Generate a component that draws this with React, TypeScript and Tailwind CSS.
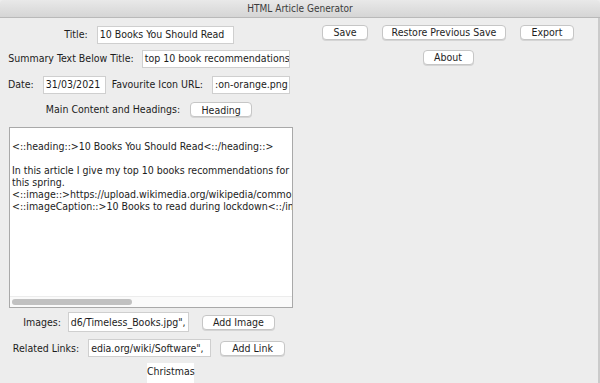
import React from 'react';

const font = { fontFamily: '"DejaVu Sans Condensed", "Open Sans", sans-serif' };

const Field: React.FC<{ text: string; w: string; h?: string }> = ({ text, w, h = 'h-[18px]' }) => (
    <div className={`${w} ${h} flex items-center bg-white border border-[#cfcfcf] px-[2px] overflow-hidden whitespace-nowrap text-[10.5px] text-[#1c1c1c]`}>
        {text}
    </div>
);

const Btn: React.FC<{ label: string; w: string }> = ({ label, w }) => (
    <button className={`${w} h-[15px] flex items-center justify-center bg-white border border-[#c6c6c6] rounded-[4px] shadow-[0_1px_0_#d5d5d5] text-[10.5px] text-[#1e1e1e] leading-none`}>
        {label}
    </button>
);

const content = [
    '',
    '<::heading::>10 Books You Should Read<::/heading::>',
    '',
    'In this article I give my top 10 books recommendations for',
    'this spring.',
    '<::image::>https://upload.wikimedia.org/wikipedia/commons/',
    '<::imageCaption::>10 Books to read during lockdown<::/imageCaption::>',
];

export default function App() {
    return (
        <div className="w-[600px] h-[383px] overflow-hidden bg-[#ededed] text-[#1c1c1c]" style={font}>
            {/* title bar */}
            <div className="h-[18px] flex items-center justify-center bg-gradient-to-b from-[#e9e9e9] to-[#d5d5d5] border-b border-[#b9b9b9] text-[10px] text-[#3c3c3c] rounded-t-[4px]">
                HTML Article Generator
            </div>

            <div className="flex h-[365px] border-r-2 border-[#cbcbcb] w-[600px]">
                {/* left panel */}
                <div className="w-[298px] flex flex-col text-[10.5px]">
                    <div className="mt-[8px] flex items-center justify-center gap-[9px]">
                        <span>Title:</span>
                        <Field text="10 Books You Should Read" w="w-[137px]" />
                    </div>
                    <div className="mt-[6px] flex items-center justify-center gap-[8px]">
                        <span>Summary Text Below Title:</span>
                        <Field text="top 10 book recommendations" w="w-[148px]" />
                    </div>
                    <div className="mt-[8px] flex items-center justify-center gap-[6px]">
                        <span className="mr-[3px]">Date:</span>
                        <Field text="31/03/2021" w="w-[63px]" />
                        <span className="mr-[3px]">Favourite Icon URL:</span>
                        <Field text=":on-orange.png" w="w-[78px]" />
                    </div>
                    <div className="mt-[8px] flex items-center justify-center gap-[10px]">
                        <span>Main Content and Headings:</span>
                        <Btn label="Heading" w="w-[62px]" />
                    </div>

                    <div className="mt-[9px] ml-[9px] w-[284px] h-[185px] bg-white border border-[#a9a9a9] flex flex-col">
                        <div className="flex-1 overflow-hidden pl-[2px] leading-[12px] whitespace-pre">
                            {content.map((line, i) => (
                                <div key={i} className="h-[12px] overflow-hidden">{line}</div>
                            ))}
                        </div>
                        <div className="h-[11px] bg-[#fafafa] border-t border-[#ececec] flex items-center px-[2px]">
                            <div className="w-[120px] h-[6px] rounded-full bg-[#c1c1c1]" />
                        </div>
                    </div>

                    <div className="mt-[4px] flex items-center justify-center gap-[7px]">
                        <span>Images:</span>
                        <Field text='d6/Timeless_Books.jpg",' w="w-[121px]" h="h-[20px]" />
                        <div className="ml-[6px]">
                            <Btn label="Add Image" w="w-[73px]" />
                        </div>
                    </div>
                    <div className="mt-[7px] flex items-center justify-center gap-[9px]">
                        <span>Related Links:</span>
                        <Field text='edia.org/wiki/Software",' w="w-[123px]" />
                        <Btn label="Add Link" w="w-[65px]" />
                    </div>
                    <div className="mt-[6px] ml-[147px] w-[47px] h-[20px] bg-white text-center leading-[16px]">
                        Christmas
                    </div>
                </div>

                {/* right panel */}
                <div className="flex-1 flex flex-col items-center">
                    <div className="mt-[7px] flex items-center gap-[14px]">
                        <Btn label="Save" w="w-[46px]" />
                        <Btn label="Restore Previous Save" w="w-[124px]" />
                        <Btn label="Export" w="w-[54px]" />
                    </div>
                    <div className="mt-[10px]">
                        <Btn label="About" w="w-[51px]" />
                    </div>
                </div>
            </div>
        </div>
    );
}
